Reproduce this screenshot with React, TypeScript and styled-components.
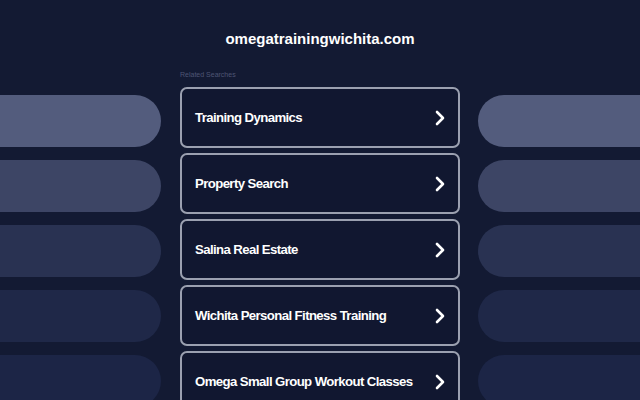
import styled, { createGlobalStyle } from "styled-components";

const GlobalStyle = createGlobalStyle`
  html, body {
    margin: 0;
    padding: 0;
    background: #131a33;
    overflow: hidden;
  }
  body {
    font-family: "Liberation Sans", Arial, sans-serif;
  }
`;

const Page = styled.div`
  width: 640px;
  height: 400px;
  background: #131a33;
  overflow: hidden;
  display: flex;
  flex-direction: column;
`;

const Header = styled.div`
  height: 66px;
  flex-shrink: 0;
  display: flex;
  align-items: center;
  justify-content: center;
  padding-top: 10px;
  box-sizing: border-box;
`;

const Domain = styled.h1`
  margin: 0;
  color: #ffffff;
  font-size: 15px;
  font-weight: bold;
`;

const Body = styled.div`
  display: flex;
  flex: 1;
  min-height: 0;
`;

const Side = styled.div<{ $align: "left" | "right" }>`
  width: 180px;
  display: flex;
  flex-direction: column;
  gap: 13px;
  padding-top: 29px;
  box-sizing: border-box;
  ${(p) => (p.$align === "left" ? "padding-right: 19px;" : "padding-left: 18px;")}
`;

const Pill = styled.div<{ $shade: string; $align: "left" | "right" }>`
  height: 52px;
  flex-shrink: 0;
  background: ${(p) => p.$shade};
  border-radius: ${(p) => (p.$align === "left" ? "0 26px 26px 0" : "26px 0 0 26px")};
`;

const Center = styled.div`
  width: 280px;
  display: flex;
  flex-direction: column;
`;

const Label = styled.div`
  color: #4e5574;
  font-size: 7px;
  height: 12px;
  line-height: 10px;
  margin-top: 4px;
  margin-bottom: 5px;
  flex-shrink: 0;
`;

const List = styled.div`
  display: flex;
  flex-direction: column;
  gap: 5px;
`;

const Card = styled.a`
  height: 61px;
  flex-shrink: 0;
  box-sizing: border-box;
  border: 2px solid #9ba0b0;
  border-radius: 7px;
  background: #111730;
  display: flex;
  align-items: center;
  justify-content: space-between;
  padding: 0 13px 0 13px;
  color: #ffffff;
  text-decoration: none;
  font-size: 13.2px;
  font-weight: bold;
  letter-spacing: -0.6px;
`;

const Chevron = () => (
  <svg width="10" height="16" viewBox="0 0 10 16">
    <polyline
      points="2,2 8,8 2,14"
      fill="none"
      stroke="#ffffff"
      strokeWidth="2.6"
      strokeLinecap="round"
      strokeLinejoin="round"
    />
  </svg>
);

const shades = ["#535c7d", "#3d4565", "#293252", "#1f2848", "#1c2546"];
const items = [
  "Training Dynamics",
  "Property Search",
  "Salina Real Estate",
  "Wichita Personal Fitness Training",
  "Omega Small Group Workout Classes",
];

export default function App() {
  return (
    <Page>
      <GlobalStyle />
      <Header>
        <Domain>omegatrainingwichita.com</Domain>
      </Header>
      <Body>
        <Side $align="left">
          {shades.map((s) => (
            <Pill key={s} $shade={s} $align="left" />
          ))}
        </Side>
        <Center>
          <Label>Related Searches</Label>
          <List>
            {items.map((t) => (
              <Card key={t} href="#">
                <span>{t}</span>
                <Chevron />
              </Card>
            ))}
          </List>
        </Center>
        <Side $align="right">
          {shades.map((s) => (
            <Pill key={s} $shade={s} $align="right" />
          ))}
        </Side>
      </Body>
    </Page>
  );
}
